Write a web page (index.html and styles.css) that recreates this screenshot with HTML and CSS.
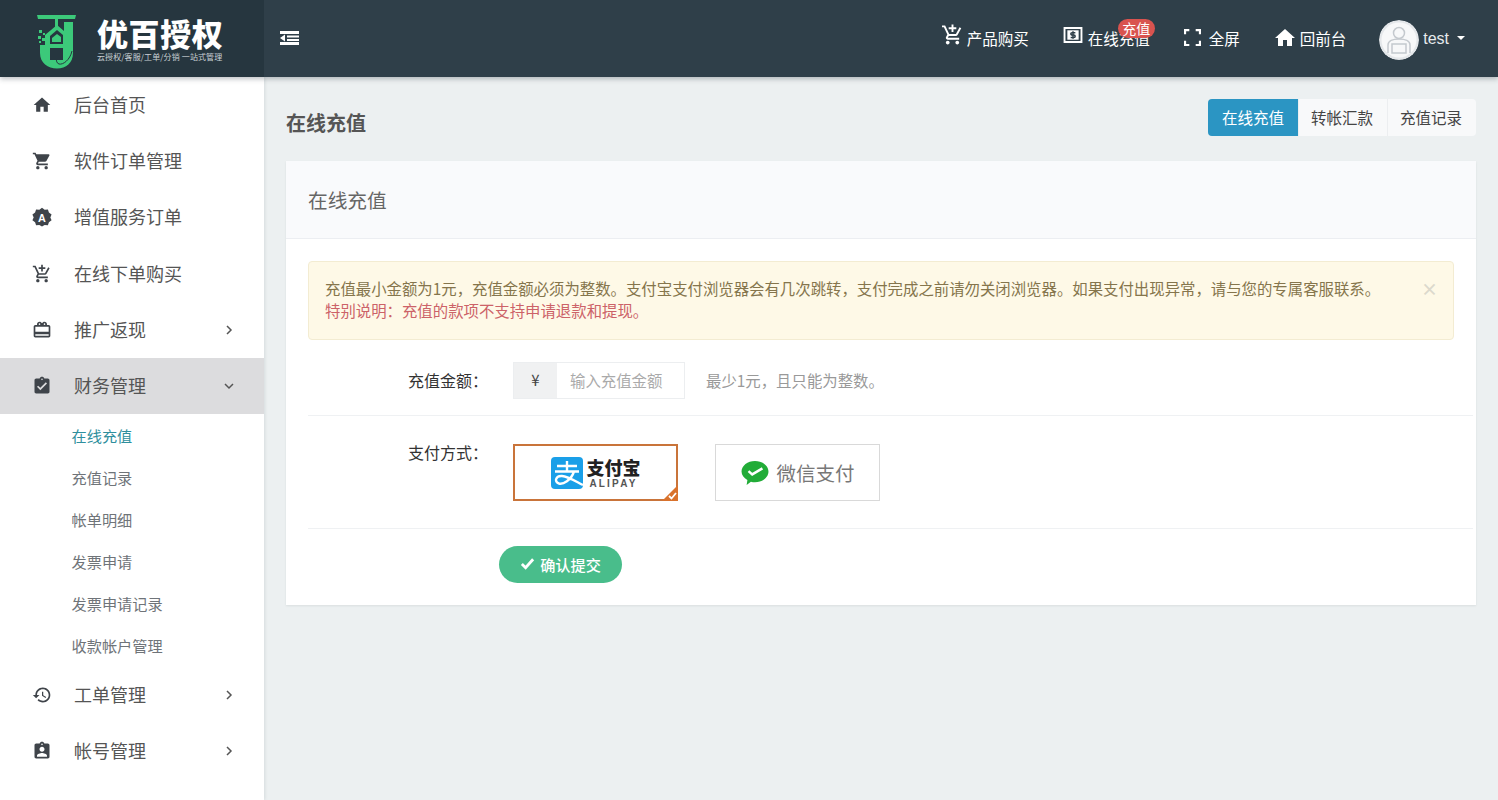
FILE: index.html
```html
<!DOCTYPE html>
<html lang="zh">
<head>
<meta charset="utf-8">
<title>在线充值</title>
<link rel="stylesheet" href="styles.css">
</head>
<body>
<header class="topbar">
  <div class="brand">
    <svg class="brand-mark" viewBox="0 0 39 55">
      <path class="lg" d="M0 1h39l-1 4H1z"/>
      <path class="lg" d="M18 5h3v8h-3z"/>
      <path class="lg" d="M3 31v8c0 10 8 15.500 17 15.500S36 49 36 39V8h-9v9l-7-6-12 10v10z"/>
      <path class="dk" d="M13 22l7-6 6 5v9H13z"/>
      <path class="dk" d="M13 34h13v12H13z"/>
      <path class="lg" d="M15 24l5-4 4 3v5h-9z"/>
      <path class="lg" d="M2 16h3v3H2zM6 19h2v2H6zM1 22h3v3H1zM5 24h3v3H5zM2 27h2v2H2z"/>
      <path fill="none" stroke="#26363f" stroke-width="1" d="M35 37c-2 9-9 14-13 13-2-.6-3-3-2.500-6"/>
    </svg>
    <div class="brand-text">
      <div class="brand-name">优百授权</div>
      <div class="brand-sub">云授权/客服/工单/分销 一站式管理</div>
    </div>
  </div>
  <div class="topnav">
    <svg class="toggle" viewBox="0 0 20 14"><path fill="#fff" d="M0 0h19v3H0zM7 4.500h12v2H7zM7 8h12v2H7zM0 11h19v3H0zM5 3.500v7L0 7z"/></svg>
    <nav class="top-links">
      <a class="top-link"><svg class="top-ico ico-cart" viewBox="1 1 22 21"><path fill="#fff" d="M11 9h2V6h3V4h-3V1h-2v3H8v2h3v3zm-4 9c-1.100 0-1.990.9-1.990 2S5.900 22 7 22s2-.9 2-2-.9-2-2-2zm10 0c-1.100 0-1.990.9-1.990 2s.89 2 1.990 2 2-.9 2-2-.9-2-2-2zm-9.830-3.250l.03-.12.9-1.630h7.450c.75 0 1.410-.41 1.750-1.030l3.860-7.010L19.420 4h-.01l-1.100 2-2.760 5H8.530l-.13-.27L6.160 6l-.95-2-.94-2H1v2h2l3.600 7.590-1.350 2.450c-.16.28-.25.61-.25.96 0 1.100.9 2 2 2h12v-2H7.420c-.13 0-.25-.11-.25-.25z"/></svg>产品购买</a>
      <a class="top-link has-badge"><svg class="top-ico ico-money" viewBox="2 3 20 17"><path fill="#fff" fill-rule="evenodd" d="M2 3h20v17H2zM4 5v13h16V5z"/><path fill="#fff" d="M6 6.500h12v10H6z"/><path fill="none" stroke="#2f3f49" stroke-width="1.600" d="M14.500 9h-3.500a1.300 1.300 0 0 0 0 2.600h2a1.300 1.300 0 0 1 0 2.600h-3.500M12 7.500v8"/></svg>在线充值<span class="badge">充值</span></a>
      <a class="top-link"><svg class="top-ico ico-full" viewBox="4 4 16 16"><path fill="#fff" d="M6 15H4v5h5v-2H6zM4 9h2V6h3V4H4zM18 18h-3v2h5v-5h-2zM15 4v2h3v3h2V4z"/></svg>全屏</a>
      <a class="top-link home-link"><svg class="top-ico ico-home" viewBox="2 3 20 17"><path fill="#fff" d="M10 20v-6h4v6h5v-8h3L12 3 2 12h3v8z"/></svg>回前台</a>
      <a class="top-link user">
        <svg class="avatar" viewBox="0 0 40 40"><circle cx="20" cy="20" r="20" fill="#e4e7ea"/><circle cx="20" cy="20" r="17.500" fill="#f7f8f9"/><circle cx="20" cy="13" r="5.500" fill="none" stroke="#c4c9ce" stroke-width="1.500"/><path fill="none" stroke="#c4c9ce" stroke-width="1.500" d="M9 33v-8c0-4 5-6 11-6s11 2 11 6v8M13 24h14v9H13z"/></svg>
        <span class="user-name">test</span><span class="caret"></span>
      </a>
    </nav>
  </div>
</header>
<div class="layout">
  <aside class="sidebar">
    <a class="side-item"><svg class="side-ico" viewBox="0 0 24 24"><path d="M10 20v-6h4v6h5v-8h3L12 3 2 12h3v8z"/></svg><span class="side-label">后台首页</span></a>
    <a class="side-item"><svg class="side-ico" viewBox="0 0 24 24"><path d="M7 18c-1.100 0-1.990.9-1.990 2S5.900 22 7 22s2-.9 2-2-.9-2-2-2zM1 2v2h2l3.600 7.590-1.350 2.450c-.16.28-.25.61-.25.96 0 1.100.9 2 2 2h12v-2H7.420c-.14 0-.25-.11-.25-.25l.03-.12.9-1.630h7.450c.75 0 1.410-.41 1.750-1.030l3.580-6.490c.08-.14.12-.31.12-.48 0-.55-.45-1-1-1H5.210l-.94-2H1zm16 16c-1.100 0-1.990.9-1.990 2s.89 2 1.990 2 2-.9 2-2-.9-2-2-2z"/></svg><span class="side-label">软件订单管理</span></a>
    <a class="side-item"><svg class="side-ico" viewBox="0 0 24 24"><path d="M12 1l3.200 2.300 3.900-.4 1.200 3.700 3.200 2.400L22 12.500l1.500 3.500-3.200 2.300-1.200 3.700-3.900-.3L12 23.500l-3.200-1.800-3.900.3-1.200-3.700L.5 16 2 12.500.5 9 3.700 6.600 4.900 2.900l3.900.4z"/><text class="agl" x="12" y="17.500" text-anchor="middle">A</text></svg><span class="side-label">增值服务订单</span></a>
    <a class="side-item"><svg class="side-ico" viewBox="0 0 24 24"><path d="M11 9h2V6h3V4h-3V1h-2v3H8v2h3v3zm-4 9c-1.100 0-1.990.9-1.990 2S5.900 22 7 22s2-.9 2-2-.9-2-2-2zm10 0c-1.100 0-1.990.9-1.990 2s.89 2 1.990 2 2-.9 2-2-.9-2-2-2zm-9.830-3.250l.03-.12.9-1.630h7.450c.75 0 1.410-.41 1.750-1.030l3.860-7.010L19.420 4h-.01l-1.100 2-2.760 5H8.530l-.13-.27L6.160 6l-.95-2-.94-2H1v2h2l3.600 7.590-1.350 2.450c-.16.28-.25.61-.25.96 0 1.100.9 2 2 2h12v-2H7.420c-.13 0-.25-.11-.25-.25z"/></svg><span class="side-label">在线下单购买</span></a>
    <a class="side-item"><svg class="side-ico" viewBox="0 0 24 24"><path d="M20 6h-2.180c.11-.31.18-.65.18-1 0-1.660-1.340-3-3-3-1.050 0-1.960.54-2.500 1.350l-.5.67-.5-.68C10.960 2.540 10.050 2 9 2 7.340 2 6 3.340 6 5c0 .35.07.69.18 1H4c-1.110 0-1.990.89-1.990 2L2 19c0 1.110.89 2 2 2h16c1.110 0 2-.89 2-2V8c0-1.110-.89-2-2-2zm-5-2c.55 0 1 .45 1 1s-.45 1-1 1-1-.45-1-1 .45-1 1-1zM9 4c.55 0 1 .45 1 1s-.45 1-1 1-1-.45-1-1 .45-1 1-1zm11 15H4v-2h16v2zm0-5H4V8h16v6z"/></svg><span class="side-label">推广返现</span><svg class="chev" viewBox="0 0 10 10"><path d="M3 1l4 4-4 4"/></svg></a>
    <a class="side-item active"><svg class="side-ico" viewBox="0 0 24 24"><path d="M19 3h-4.180C14.400 1.840 13.300 1 12 1c-1.300 0-2.400.84-2.820 2H5c-1.100 0-2 .9-2 2v14c0 1.100.9 2 2 2h14c1.100 0 2-.9 2-2V5c0-1.100-.9-2-2-2zm-7 0c.55 0 1 .45 1 1s-.45 1-1 1-1-.45-1-1 .45-1 1-1zm-2 14l-4-4 1.410-1.410L10 14.170l6.590-6.590L18 9l-8 8z"/></svg><span class="side-label">财务管理</span><svg class="chev" viewBox="0 0 10 10"><path d="M1 3l4 4 4-4"/></svg></a>
    <ul class="submenu">
      <li class="sub-item current">在线充值</li>
      <li class="sub-item">充值记录</li>
      <li class="sub-item">帐单明细</li>
      <li class="sub-item">发票申请</li>
      <li class="sub-item">发票申请记录</li>
      <li class="sub-item">收款帐户管理</li>
    </ul>
    <a class="side-item"><svg class="side-ico" viewBox="0 0 24 24"><path d="M13 3c-4.970 0-9 4.030-9 9H1l3.890 3.890.07.14L9 12H6c0-3.870 3.130-7 7-7s7 3.130 7 7-3.130 7-7 7c-1.930 0-3.680-.79-4.940-2.060l-1.420 1.420C8.270 19.990 10.510 21 13 21c4.970 0 9-4.030 9-9s-4.030-9-9-9zm-1 5v5l4.280 2.540.72-1.210-3.500-2.080V8H12z"/></svg><span class="side-label">工单管理</span><svg class="chev" viewBox="0 0 10 10"><path d="M3 1l4 4-4 4"/></svg></a>
    <a class="side-item"><svg class="side-ico" viewBox="0 0 24 24"><path d="M19 3h-4.180C14.400 1.840 13.300 1 12 1c-1.300 0-2.400.84-2.820 2H5c-1.100 0-2 .9-2 2v14c0 1.100.9 2 2 2h14c1.100 0 2-.9 2-2V5c0-1.100-.9-2-2-2zm-7 0c.55 0 1 .45 1 1s-.45 1-1 1-1-.45-1-1 .45-1 1-1zm0 4c1.660 0 3 1.340 3 3s-1.340 3-3 3-3-1.340-3-3 1.340-3 3-3zm6 12H6v-1.400c0-2 4-3.100 6-3.100s6 1.100 6 3.100V19z"/></svg><span class="side-label">帐号管理</span><svg class="chev" viewBox="0 0 10 10"><path d="M3 1l4 4-4 4"/></svg></a>
  </aside>
  <main class="content">
    <div class="page-head">
      <h1 class="page-title">在线充值</h1>
      <div class="btn-group">
        <a class="seg on">在线充值</a><a class="seg">转帐汇款</a><a class="seg">充值记录</a>
      </div>
    </div>
    <section class="card">
      <div class="card-head">在线充值</div>
      <div class="card-body">
        <div class="alert">
          <p class="alert-line">充值最小金额为1元&#xFF0C;充值金额必须为整数。支付宝支付浏览器会有几次跳转&#xFF0C;支付完成之前请勿关闭浏览器。如果支付出现异常&#xFF0C;请与您的专属客服联系。</p>
          <p class="alert-line danger">特别说明&#xFF1A;充值的款项不支持申请退款和提现。</p>
          <span class="alert-close">×</span>
        </div>
        <div class="form-row amount-row">
          <label class="form-label">充值金额&#xFF1A;</label>
          <div class="input-group"><span class="addon">¥</span><span class="fake-input">输入充值金额</span></div>
          <span class="hint">最少1元&#xFF0C;且只能为整数。</span>
        </div>
        <div class="form-row pay-row">
          <label class="form-label">支付方式&#xFF1A;</label>
          <div class="pay-opt selected">
            <svg class="ali-ico" viewBox="0 0 32 32"><rect width="32" height="32" rx="4" fill="#1a9fe8"/><path fill="none" stroke="#fff" stroke-width="2.400" d="M16 4v10M6 9h20M4 14.500h24M23 14.500c-3 9-11 13-15 12-5-1.500-3.500-8 3-7.500 6 .5 13 5 21 9"/></svg>
            <div class="ali-text"><div class="ali-cn">支付宝</div><div class="ali-en">ALIPAY</div></div>
            <svg class="corner" viewBox="0 0 16 16"><path fill="#d9722c" d="M16 0v16H0z"/><path fill="none" stroke="#fff" stroke-width="1.800" d="M7 11l2.500 2.500L14 8"/></svg>
          </div>
          <div class="pay-opt">
            <svg class="wx-ico" viewBox="0 0 30 28"><path fill="#22ac38" d="M15 1c8 0 14.500 5 14.500 11.500S23 24 15 24c-1.500 0-3-.2-4.400-.6L6 27l.8-5.500C3 19.500.5 16.200.5 12.500.5 6 7 1 15 1z"/><path fill="none" stroke="#fff" stroke-width="2.600" d="M8 12l4 3.500L23 9"/></svg>
            <span class="wx-text">微信支付</span>
          </div>
        </div>
        <div class="submit-row">
          <button class="submit" type="button"><svg class="check" viewBox="0 0 16 16"><path fill="none" stroke="#fff" stroke-width="3" d="M2 8.500l4 4 8-9"/></svg>确认提交</button>
        </div>
      </div>
    </section>
  </main>
</div>
</body>
</html>
```
FILE: styles.css
```css
* { box-sizing: border-box; }
html, body { margin: 0; height: 100%; overflow: hidden; }
body {
  background: #ecf0f1;
  color: #444;
  font-family: "Noto Sans CJK SC", "Liberation Sans", sans-serif;
  font-weight: 400;
}
a { color: inherit; text-decoration: none; }

.topbar {
  display: flex;
  height: 77px;
  background: #2f3f49;
  box-shadow: 0 2px 5px rgba(40, 50, 60, .3);
  position: relative;
  z-index: 2;
}
.brand {
  width: 264px;
  flex: none;
  background: #26363f;
  display: flex;
  align-items: center;
  padding: 0 0 0 37px;
  gap: 21px;
}
.brand-mark { width: 39px; height: 55px; flex: none; margin-top: 5px; }
.lg { fill: #3cc97a; }
.dk { fill: #26363f; }
.brand-text { display: flex; flex-direction: column; color: #fff; margin-top: 1px; }
.brand-name { font-size: 31px; line-height: 36px; font-weight: 900; letter-spacing: .6px; }
.brand-sub { font-size: 8px; line-height: 12px; color: #c9d0d4; white-space: nowrap; letter-spacing: .12px; }

.topnav {
  flex: 1;
  display: flex;
  align-items: center;
  justify-content: space-between;
  padding: 0 33px 2px 16px;
}
.toggle { width: 20px; height: 14px; flex: none; margin-top: 1px; }
.top-links { display: flex; align-items: center; gap: 34px; }
.top-link {
  display: flex;
  align-items: center;
  color: #fff;
  font-size: 15.500px;
  line-height: 20px;
  position: relative;
}
.home-link { margin-left: 1px; }
.user { margin-left: -1px; }
.top-ico { flex: none; }
.ico-cart { width: 21px; height: 21px; margin: -7px 4px 0 0; }
.ico-money { width: 20px; height: 16px; margin: -6px 5px 0 0; }
.ico-full { width: 17px; height: 17px; margin: 0 8px 0 0; }
.ico-home { width: 20px; height: 17px; margin: 0 5px 0 0; }
.badge {
  position: absolute;
  left: 55px;
  top: -9px;
  width: 37px;
  height: 19px;
  border-radius: 10px;
  background: #d9534f;
  color: #fff;
  font-size: 14px;
  line-height: 19px;
  text-align: center;
}
.avatar { width: 40px; height: 40px; border-radius: 50%; margin: 2px 4px -2px 0; }
.user-name { font-size: 16px; margin-top: 2px; color: #e6eaec; font-family: "Liberation Sans", sans-serif; }
.caret {
  width: 0; height: 0;
  margin-left: 8px;
  border-left: 4px solid transparent;
  border-right: 4px solid transparent;
  border-top: 4px solid #fff;
}

.layout { display: flex; height: 723px; }
.sidebar {
  width: 264px;
  flex: none;
  background: #fff;
  box-shadow: 1px 0 3px rgba(60, 70, 80, .12);
}
.side-item {
  display: flex;
  align-items: center;
  height: 56.200px;
  padding: 0 30px 0 32px;
  color: #555;
  font-size: 18px;
}
.side-ico { width: 20px; height: 20px; fill: #3f444a; flex: none; }
.side-label { margin-left: 22px; flex: 1; padding-bottom: 2px; }
.agl { font-size: 13px; font-weight: 700; fill: #fff; font-family: "Liberation Sans", sans-serif; }
.chev { width: 10px; height: 10px; fill: none; stroke: #555; stroke-width: 1.500; flex: none; }
.side-item.active { background: #dcdcde; }
.submenu { list-style: none; margin: 0; padding: 0 0 .6px; }
.sub-item {
  height: 42px;
  padding-left: 71.500px;
  font-size: 15.200px;
  line-height: 42px;
  color: #6f7479;
}
.sub-item.current { color: #2f8f9d; }

.content { flex: 1; padding: 22px 22px 0; min-width: 0; }
.page-head { display: flex; align-items: center; justify-content: space-between; height: 37px; margin-bottom: 25px; }
.page-title { margin: 10px 0 0; font-size: 20px; font-weight: 700; color: #555; line-height: 30px; }
.btn-group { display: flex; height: 37px; border-radius: 4px; overflow: hidden; }
.seg {
  background: #f8f9fa;
  color: #444;
  font-size: 15.500px;
  line-height: 37px;
  border-left: 1px solid #eceef0;
  width: 89px;
  padding-right: 2px;
  text-align: center;
  white-space: nowrap;
}
.seg.on { background: #2b95c3; color: #fff; border: 0; width: 90px; padding-right: 0; }

.card { background: #fff; height: 444px; box-shadow: 0 1px 2px rgba(60, 70, 80, .1); }
.card-head {
  height: 78px;
  background: #f9fafc;
  border-bottom: 1px solid #eceef2;
  padding-left: 22px;
  font-size: 19.700px;
  line-height: 77px;
  color: #666;
}
.card-body { padding: 22px 3px 0 22px; }
.alert {
  position: relative;
  width: 1146px;
  height: 79px;
  padding: 15px 16px;
  background: #fef9e7;
  border: 1px solid #f3ecd2;
  border-radius: 4px;
  font-size: 15.400px;
  line-height: 22px;
  color: #85754c;
}
.alert-line { margin: 0; white-space: nowrap; }
.danger { color: #cc6268; }
.alert-close {
  position: absolute;
  right: 15px;
  top: 14px;
  font-size: 17px;
  line-height: 26px;
  font-weight: 700;
  color: #dcd9cd;
}
.form-row { display: flex; border-bottom: 1px solid #eff1f3; }
.form-label {
  width: 105px;
  margin-left: 100px;
  font-size: 16px;
  line-height: 24px;
  color: #333;
  flex: none;
  white-space: nowrap;
}
.amount-row { height: 76px; align-items: flex-start; padding-top: 22px; }
.amount-row .form-label { padding-top: 6px; }
.input-group { display: flex; height: 37px; width: 172px; border: 1px solid #eceef0; flex: none; }
.addon { width: 43px; background: #f0f1f2; text-align: center; font-size: 15px; line-height: 34px; color: #444; }
.fake-input { flex: 1; padding-left: 13px; font-size: 15.400px; line-height: 34px; color: #aaa; white-space: nowrap; }
.hint { margin-left: 21px; font-size: 15.400px; line-height: 36px; color: #999; }
.pay-row { height: 113px; padding-top: 27px; gap: 37px; }
.pay-row .form-label { margin-right: -37px; line-height: 18px; }
.pay-opt {
  position: relative;
  width: 165px;
  height: 57px;
  margin-top: 1px;
  border: 1px solid #d9d9d9;
  display: flex;
  align-items: center;
  justify-content: center;
  flex: none;
}
.pay-opt.selected { border: 2px solid #c9743a; gap: 4px; }
.ali-ico { width: 32px; height: 32px; flex: none; }
.ali-text { display: flex; flex-direction: column; align-items: center; }
.ali-cn { font-size: 18px; line-height: 21px; font-weight: 900; color: #222; }
.ali-en { font-size: 10px; line-height: 11px; letter-spacing: 2.200px; font-weight: 700; color: #555; font-family: "Liberation Sans", sans-serif; }
.corner { position: absolute; right: -2px; bottom: -2px; width: 16px; height: 16px; }
.wx-ico { width: 30px; height: 26px; flex: none; margin-right: 6px; }
.wx-text { font-size: 19.500px; color: #777; line-height: 26px; }
.submit-row { padding: 17px 0 0 191px; }
.submit {
  display: flex;
  align-items: center;
  justify-content: center;
  width: 123px;
  height: 37px;
  border: 0;
  border-radius: 19px;
  background: #49bd8b;
  color: #fff;
  font-family: inherit;
  font-size: 15.200px;
  font-weight: 500;
  padding: 0 0 2px;
}
.check { width: 15px; height: 15px; margin-right: 5px; }
```
